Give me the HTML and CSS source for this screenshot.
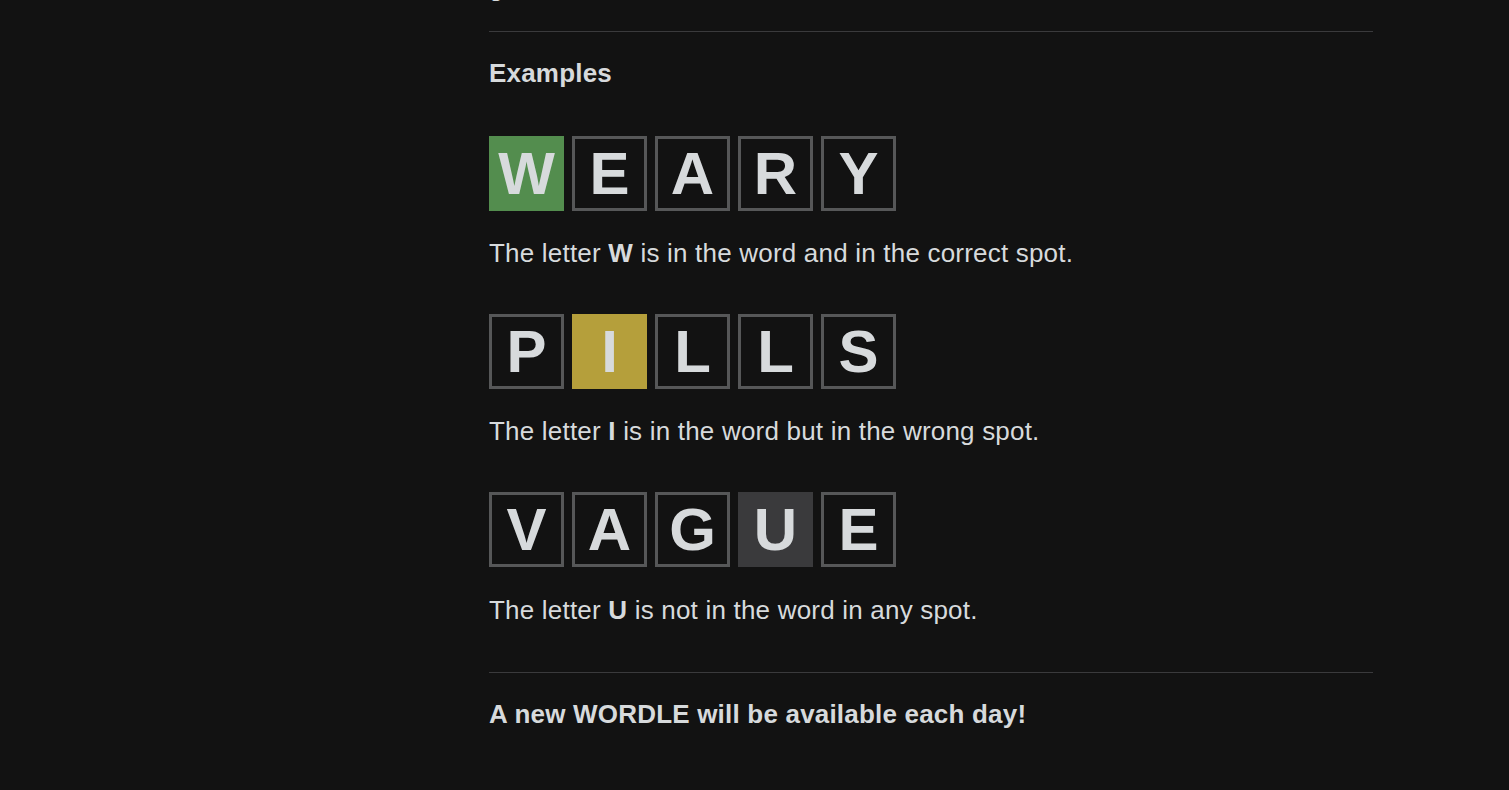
FILE: index.html
```html
<!DOCTYPE html>
<html>

<head>
    <title>How To Play</title>
    <link rel="stylesheet" href="styles.css">
</head>

<body>
    <div class="help">
        <p class="tail">guess was to the word.</p>
        <hr>
        <h3 class="heading">Examples</h3>

        <div class="example">
            <div class="row">
                <div class="tile correct">W</div>
                <div class="tile">E</div>
                <div class="tile">A</div>
                <div class="tile">R</div>
                <div class="tile">Y</div>
            </div>
            <p>The letter <strong>W</strong> is in the word and in the correct spot.</p>
        </div>

        <div class="example">
            <div class="row">
                <div class="tile">P</div>
                <div class="tile present">I</div>
                <div class="tile">L</div>
                <div class="tile">L</div>
                <div class="tile">S</div>
            </div>
            <p>The letter <strong>I</strong> is in the word but in the wrong spot.</p>
        </div>

        <div class="example last">
            <div class="row">
                <div class="tile">V</div>
                <div class="tile">A</div>
                <div class="tile">G</div>
                <div class="tile absent">U</div>
                <div class="tile">E</div>
            </div>
            <p>The letter <strong>U</strong> is not in the word in any spot.</p>
        </div>

        <hr class="bottom">
        <p class="daily">A new WORDLE will be available each day!</p>
    </div>
</body>

</html>
```

FILE: styles.css
```css
body {
    font-family: "Liberation Sans", Arial, sans-serif;
    margin: 0;
    padding: 0;
    background-color: #121212;
    color: #d7dadc;
    overflow: hidden;
}

.help {
    width: 884px;
    margin-left: 489px;
    font-size: 26px;
    line-height: 30px;
    letter-spacing: 0.2px;
}

p {
    margin: 0;
}

.tail {
    margin-top: -28px;
}

hr {
    border: none;
    border-top: 1px solid #3a3a3c;
    margin: 29px 0 0;
}

.heading {
    font-size: 26px;
    font-weight: bold;
    margin: 26px 0 0;
}

.example {
    margin-top: 46px;
}

.heading + .example {
    margin-top: 48px;
}

.row {
    display: flex;
    gap: 8px;
}

.tile {
    width: 75px;
    height: 75px;
    box-sizing: border-box;
    border: 3px solid #565758;
    display: flex;
    justify-content: center;
    align-items: center;
    font-size: 60px;
    font-weight: bold;
    letter-spacing: 0;
    text-transform: uppercase;
}

.tile.correct {
    background-color: #538d4e;
    border-color: #538d4e;
}

.tile.present {
    background-color: #b59f3b;
    border-color: #b59f3b;
}

.tile.absent {
    background-color: #3a3a3c;
    border-color: #3a3a3c;
}

.example p {
    margin-top: 27px;
}

.example.last p {
    margin-top: 28px;
}

hr.bottom {
    margin-top: 47px;
}

.daily {
    font-weight: bold;
    margin-top: 26px;
}
```
